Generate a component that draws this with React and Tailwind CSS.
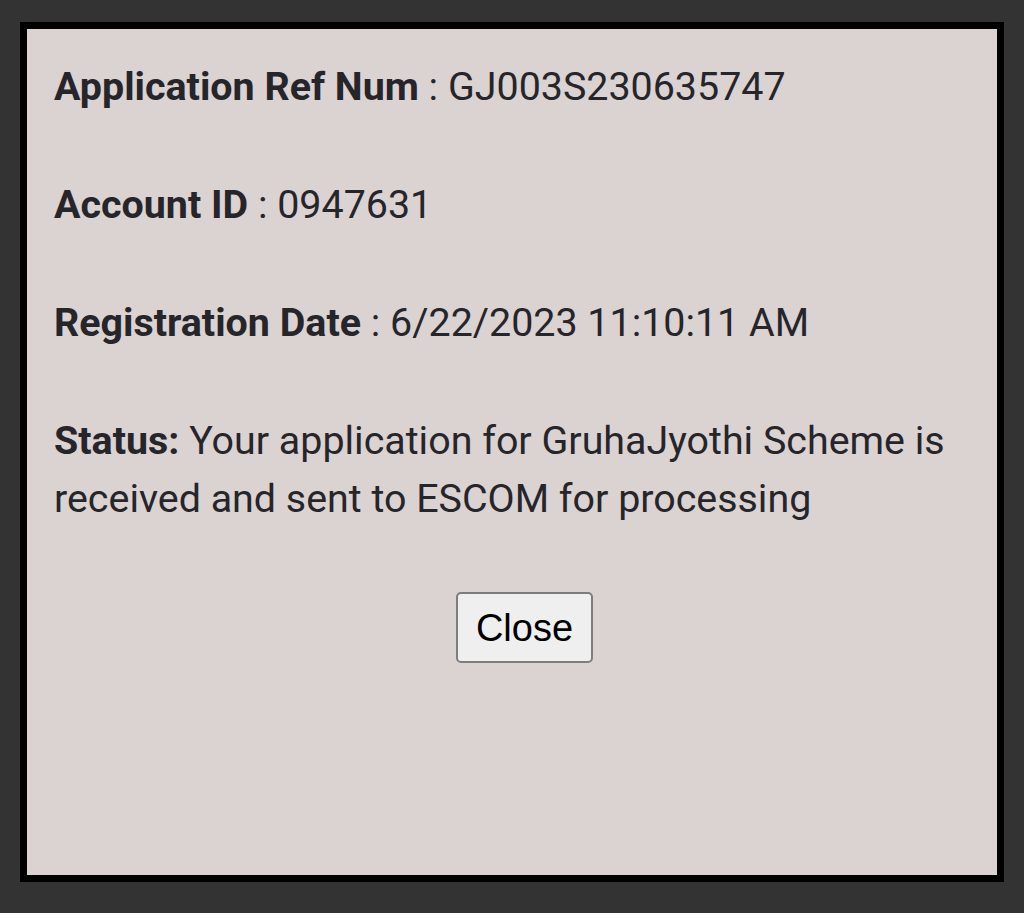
import React from 'react';

const rows = [
  { label: 'Application Ref Num', sep: ' : ', value: 'GJ003S230635747' },
  { label: 'Account ID', sep: ' : ', value: '0947631' },
  { label: 'Registration Date', sep: ' : ', value: '6/22/2023 11:10:11 AM' },
];

const App = () => (
  <div className="w-[1024px] h-[913px] bg-[#333333] pt-[22px] pl-[20px] font-['Roboto',sans-serif]">
    <div className="w-[984px] h-[860px] border-[7px] border-black bg-[#dbd2d2] px-[27px] pt-[29px] text-[39.4px] leading-[58px] text-[#25252a]">
      {rows.map(({ label, sep, value }) => (
        <p key={label} className="mb-[60px]">
          <span className="font-bold">{label}</span>
          {sep}
          {value}
        </p>
      ))}
      <p>
        <span className="font-bold">Status:</span> Your application for GruhaJyothi Scheme is received and sent to
        ESCOM for processing
      </p>
      <div className="flex justify-center mt-[64px] ml-[25px]">
        <button className="w-[137px] h-[71px] rounded-[5px] border-2 border-[#7d7d7d] bg-[#efefef] text-black text-[38px] font-['Liberation_Sans',sans-serif]">
          Close
        </button>
      </div>
    </div>
  </div>
);

export default App;
